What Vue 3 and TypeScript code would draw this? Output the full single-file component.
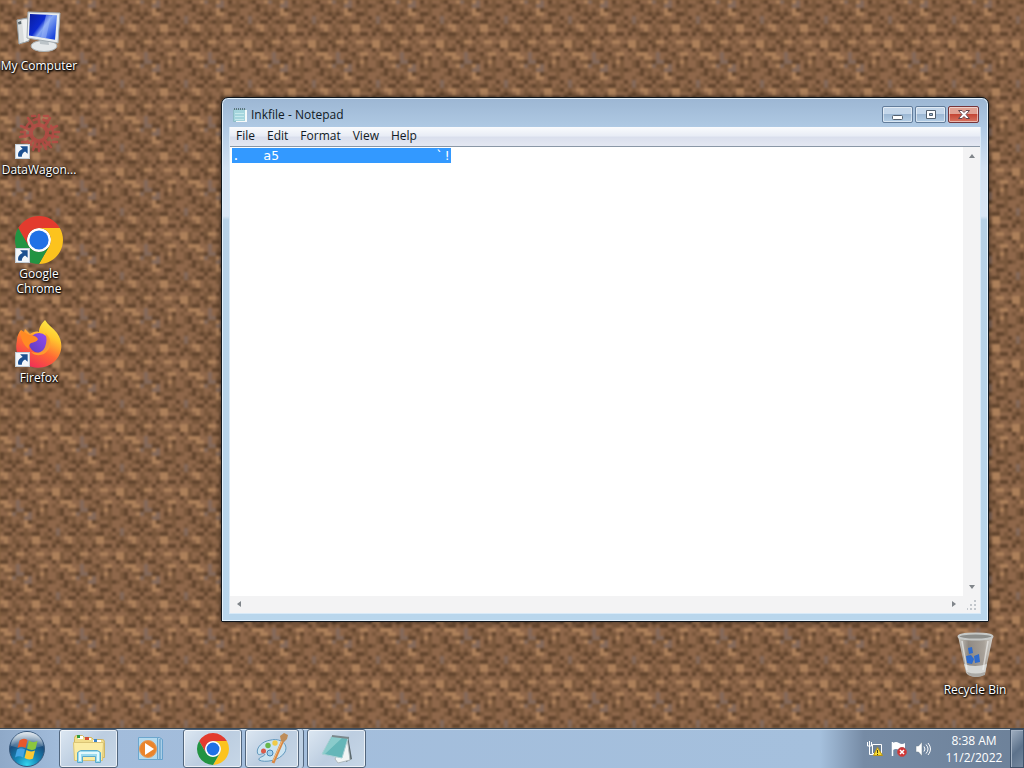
<script setup lang="ts">
import { computed, onMounted, ref } from 'vue'

const dirtRows: string[] = [
  'bblgmdmbmmbdmmlg',
  'mbggmbbbdbmmdbbm',
  'bmldbmmbmmmbdmbm',
  'dbllmddbmmbmmbdb',
  'mmbmmbmmdmgmbmmd',
  'bdbbddmbmbgbmddm',
  'mmbmllbbdmbmllmb',
  'bmmbllmmmbdbmlmb',
  'dbmdbmddmdmbddbm',
  'bmdmmbmmbmmmbbmb',
  'llmbmllmmllbmmdb',
  'bmbmbmmbdllbmbmd',
  'mddmmbbmmdmbddmb',
  'gmmbdmllmmblllmm',
  'gmbmbbmdmbmmbllm',
  'ggddmblbmmbdmbbd',
]
const dirtColors: Record<string, string> = {
  d: '#62452e',
  b: '#7a583c',
  m: '#8f674a',
  l: '#ad805a',
  g: '#84695a',
}
const soil = computed(() =>
  dirtRows.flatMap((row, y) =>
    row.split('').map((c, x) => ({ x: x * 4, y: y * 4, fill: dirtColors[c] })),
  ),
)

const menus: string[] = ['File', 'Edit', 'Format', 'View', 'Help']
const content = ref('.   a5' + ' '.repeat(20) + '`!')
const editor = ref<HTMLTextAreaElement | null>(null)

onMounted(() => {
  editor.value?.focus()
  editor.value?.setSelectionRange(0, content.value.length)
})
</script>

<template>
  <main class="desktop">
    <svg class="defs" width="0" height="0" aria-hidden="true">
      <symbol id="chrome" viewBox="0 0 48 48">
        <circle cx="24" cy="24" r="12" fill="#fff" />
        <path fill="#e33b2e" d="M24 12H44.78A24 24 0 0 0 3.22 12L13.61 30A12 12 0 0 1 24 12Z" />
        <path fill="#fcc31e" d="M34.39 30L24 48A24 24 0 0 0 44.78 12H24A12 12 0 0 1 34.39 30Z" />
        <path fill="#229342" d="M13.61 30L3.22 12A24 24 0 0 0 24 48L34.39 30A12 12 0 0 1 13.61 30Z" />
        <circle cx="24" cy="24" r="9.6" fill="#2071e5" />
      </symbol>
      <symbol id="shortcut" viewBox="0 0 14 14">
        <path fill="#f4f7fa" stroke="#c3ccd5" d="M.5.5h13v13H.5z" />
        <path fill="#1c4f8f" d="M4.8 2.2h7v7L9.4 6.9C7.2 8.2 6.3 9.8 6.4 12H3.2C2 8.6 4 6 7.2 4.7Z" />
      </symbol>
    </svg>

    <div class="work">
      <svg class="wallpaper" aria-hidden="true">
        <defs>
          <pattern id="dirt" x="16" y="0" width="64" height="64" patternUnits="userSpaceOnUse">
            <rect width="64" height="64" fill="#85603f" />
            <rect v-for="(p, i) in soil" :key="i" :x="p.x" :y="p.y" width="4" height="4" :fill="p.fill" />
          </pattern>
        </defs>
        <rect width="100%" height="100%" fill="url(#dirt)" />
      </svg>

      <nav class="icons" aria-label="Desktop icons">
        <button class="shortcut">
          <svg class="pic" viewBox="0 0 48 48">
            <defs>
              <linearGradient id="scr" x1="0" y1="0" x2="1" y2=".7">
                <stop offset="0" stop-color="#0a1c9c" /><stop offset=".45" stop-color="#0c2bd0" />
                <stop offset=".6" stop-color="#87a8f3" /><stop offset="1" stop-color="#1c47dd" />
              </linearGradient>
            </defs>
            <path fill="#d9dcdc" stroke="#98a0a4" d="M2 12l10-2 2 23-10 3Z" />
            <path fill="#eef0f0" d="M7 12l7-1 1 20-6 3Z" />
            <path fill="#5b676d" d="M3 14l3-1 .4 3-3 .6Z" />
            <ellipse cx="29" cy="38" rx="13" ry="5.5" fill="#e4e7e8" stroke="#a9afb2" />
            <path fill="#bcc3c7" d="M24 29l9 1 1 7-9-1Z" />
            <path fill="#e9ecee" stroke="#a3abb0" d="M13 4l32 1-2 30-31-5Z" />
            <path fill="url(#scr)" d="M15 6l27 1.200-2 24.500-26-4.200Z" />
            <path fill="#a9c2fa" opacity=".45" d="M31 6.900l5 .3-5 23-5-.8Z" />
          </svg>
          <span>My Computer</span>
        </button>
        <button class="shortcut">
          <svg class="pic" viewBox="0 0 48 48">
            <g fill="none" stroke="#b84a45" stroke-width="2.600" opacity=".8" stroke-linecap="round">
              <circle cx="24" cy="21" r="8" stroke-width="4" stroke-dasharray="5 2" />
              <circle cx="24" cy="21" r="14" stroke-dasharray="5 5" />
              <path d="M24 3v9M13 6l5 8M35 6l-5 8M6 14l9 4M42 14l-9 4M5 25l11-2M43 25l-11-2M12 35l7-8M36 35l-7-8M24 30v9M18 38l3-9M31 37l-4-8" />
              <path d="M17 4h3M29 4h4M6 20h3M40 20h4M7 30h4M38 30h4" />
            </g>
            <use href="#shortcut" x="0" y="32" width="15" height="15" />
          </svg>
          <span>DataWagon...</span>
        </button>
        <button class="shortcut">
          <svg class="pic" viewBox="0 0 48 48">
            <use href="#chrome" width="48" height="48" />
            <use href="#shortcut" x="0" y="32" width="15" height="15" />
          </svg>
          <span>Google<br />Chrome</span>
        </button>
        <button class="shortcut">
          <svg class="pic" viewBox="0 0 48 48">
            <defs>
              <linearGradient id="fox" x1=".8" y1="0" x2=".3" y2="1">
                <stop offset="0" stop-color="#fff04b" /><stop offset=".3" stop-color="#ffc72e" />
                <stop offset=".62" stop-color="#ff6a34" /><stop offset="1" stop-color="#f02a58" />
              </linearGradient>
              <linearGradient id="globe" x1="1" y1="0" x2="0" y2="1">
                <stop offset="0" stop-color="#9a4cf0" /><stop offset="1" stop-color="#5a3cbd" />
              </linearGradient>
            </defs>
            <path fill="url(#fox)" d="M30 0c3 5 8 8 12 13 7 10 5 21-2 28-8 8-22 9-31 2C2 38 0 29 2 20c0-4 2-8 4-10l2 5 2-6 5 5c3-2 6-3 9-2 0-5 3-9 6-12Z" />
            <circle cx="24" cy="23" r="10" fill="url(#globe)" />
            <path fill="#ff8a24" d="M6 10l8 5c4 0 7 1 9 4-1 3-4 3-7 4-2 2-3 3-2 6-5-3-9-10-8-19Z" />
            <path fill="#ffa02c" d="M30 13c6 4 7 12 3 17-4 6-12 7-17 2 7 2 12 0 14-5 2-5 2-10 0-14Z" opacity=".9" />
            <use href="#shortcut" x="0" y="32" width="15" height="15" />
          </svg>
          <span>Firefox</span>
        </button>
      </nav>

      <button class="shortcut bin">
        <svg class="pic" viewBox="0 0 48 48">
          <defs>
            <linearGradient id="glass"><stop offset="0" stop-color="#d2d2cd" /><stop offset=".3" stop-color="#8f8b86" /><stop offset=".75" stop-color="#aba69f" /><stop offset="1" stop-color="#dddcd8" /></linearGradient>
          </defs>
          <path fill="url(#glass)" opacity=".93" d="M7 4h35l-8 37q-9 7-19 0Z" />
          <path fill="#d5d5d2" d="M13 32q11 4 23 0l-2 10q-9 6-18 0Z" />
          <path fill="#aaa8a4" d="M16 40q9 3 18 0v3q-9 4-17 0Z" />
          <ellipse cx="24.500" cy="4.500" rx="17" ry="3" fill="#8c8d8a" stroke="#c6c8c6" stroke-width="2" />
          <path fill="#2f6bcb" d="M17 16l4-1 1 6-4 1ZM15 24l5-1 3 4-2 5-5-1ZM23 24l5-2 1 8-5 1Z" />
          <path stroke="#f5f5f3" stroke-width="1.500" opacity=".6" d="M11 9l5 29M37 9l-5 29" />
        </svg>
        <span>Recycle Bin</span>
      </button>

      <section class="window" aria-label="Inkfile - Notepad">
        <header class="title">
          <svg width="16" height="16" viewBox="0 0 16 16" aria-hidden="true">
            <path fill="#a5d5dd" stroke="#8fbcc6" d="M1.500 2.500h12v12h-12Z" />
            <path fill="#f6fafa" d="M13 3h2v12H4v-1h9Z" />
            <path stroke="#c6e9ec" d="M3 6.500h9M3 9.500h9M3 12.500h9" />
            <path stroke="#5d757e" stroke-dasharray="1 1" stroke-width="2" d="M2 2h12" />
          </svg>
          <h1>Inkfile - Notepad</h1>
          <div class="controls">
            <button aria-label="Minimize"><svg width="14" height="12" viewBox="0 0 14 12"><rect x="1.500" y="6.500" width="10" height="4" rx="1" fill="#fff" stroke="#53606e" /></svg></button>
            <button aria-label="Maximize"><svg width="12" height="12" viewBox="0 0 12 12"><path fill="#fff" fill-rule="evenodd" stroke="#53606e" d="M1.500 1.500h9v8h-9ZM4.500 4.500v2h3v-2Z" /></svg></button>
            <button class="close" aria-label="Close"><svg width="14" height="12" viewBox="0 0 14 12"><path fill="#fff" stroke="#65484e" d="M1.500 1.500h3.500l2 2 2-2h3.500L9 5.500l3.500 4H9l-2-2-2 2H1.500L5 5.500Z" /></svg></button>
          </div>
        </header>
        <div class="client">
          <nav class="menu" aria-label="Menu bar"><button v-for="m in menus" :key="m">{{ m }}</button></nav>
          <div class="sheet">
            <textarea ref="editor" v-model="content" aria-label="Document text" spellcheck="false" wrap="off"></textarea>
            <div class="vbar">
              <button aria-label="Scroll up"><svg width="8" height="5" viewBox="0 0 8 5"><path fill="#80858a" d="M4 0l3 4H1Z" /></svg></button>
              <button aria-label="Scroll down"><svg width="8" height="5" viewBox="0 0 8 5"><path fill="#80858a" d="M1 1h6L4 5Z" /></svg></button>
            </div>
            <div class="hbar">
              <button aria-label="Scroll left"><svg width="5" height="8" viewBox="0 0 5 8"><path fill="#80858a" d="M5 1v6L1 4Z" /></svg></button>
              <button aria-label="Scroll right"><svg width="5" height="8" viewBox="0 0 5 8"><path fill="#80858a" d="M0 1v6l4-3Z" /></svg></button>
            </div>
            <div class="grip"><svg width="10" height="10" viewBox="0 0 10 10"><path fill="#c3c7cc" d="M7 0h2v2H7ZM7 4h2v2H7ZM7 8h2v2H7ZM3 4h2v2H3ZM3 8h2v2H3ZM0 8h1v2H0Z" /></svg></div>
          </div>
        </div>
      </section>
    </div>

    <footer class="taskbar">
      <button class="start" aria-label="Start">
        <svg width="38" height="38" viewBox="0 0 38 38">
          <defs>
            <radialGradient id="orb" cx=".5" cy=".95" r=".9"><stop offset="0" stop-color="#35d5ee" /><stop offset=".35" stop-color="#1689b8" /><stop offset=".75" stop-color="#1a4c7c" /><stop offset="1" stop-color="#839fb8" /></radialGradient>
            <linearGradient id="shine" x2="0" y2="1"><stop offset="0" stop-color="#fff" stop-opacity=".75" /><stop offset="1" stop-color="#fff" stop-opacity=".1" /></linearGradient>
          </defs>
          <circle cx="19" cy="19" r="17.500" fill="url(#orb)" stroke="#38577a" />
          <path fill="url(#shine)" d="M3 16a16 14 0 0 1 32 0q-16 5-32 0Z" />
          <path fill="#e8582b" d="M11.500 10.500q4-3 8-.500l-2 8q-4-2.500-8 0Z" />
          <path fill="#8cc63e" d="M21 10.500q4 3 8.500 .500l-2 8q-4 2-8.500-.500Z" />
          <path fill="#43a4e4" d="M9 19.500q4-2.500 8 0L15 27.500q-4-2.500-8 0Z" />
          <path fill="#fcc934" d="M18.500 20q4 2.500 8.500 .500l-2 8q-4 2-8.500-.500Z" />
        </svg>
      </button>
      <button class="task open" aria-label="Windows Explorer">
        <svg width="36" height="32" viewBox="0 0 36 32">
          <path fill="#f2de8c" stroke="#cfb765" d="M3.500 5.500q0-3 2-3h6l2 2h7l2 2h9q2 0 2 3v15h-30Z" />
          <path fill="#fff" d="M7 3h5v3H7ZM14 5h6v2h-6ZM22 7h8v2h-8Z" />
          <path fill="#319b42" d="M6 2h3v3H6Z" /><path fill="#d55038" d="M14 4h4v3h-4Z" /><path fill="#3c83c5" d="M23 6h3v3h-3Z" />
          <path fill="#fbeca4" stroke="#dbc577" d="M2.500 9.500h30l-1 18h-28Z" />
          <path fill="#9cdbee" stroke="#5ba9cb" d="M6.500 29.500v-10l3-2h17l3 2v10h-5v-6h-13v6Z" />
          <path stroke="#e2f9fd" stroke-width="2" d="M9 28v-8h18v8" fill="none" />
        </svg>
      </button>
      <button class="task" aria-label="Windows Media Player">
        <svg width="28" height="28" viewBox="0 0 28 28">
          <path fill="#aacfe7" stroke="#66a2cd" d="M7.500 2.500h15l3 2v20h-18Z" />
          <path fill="#b4daee" stroke="#6ca6cd" d="M1.500 2.500h19v22h-19Z" />
          <path stroke="#5793bf" d="M23 4v20" />
          <circle cx="11" cy="14" r="8.500" fill="#ea842b" stroke="#e09a5c" />
          <path fill="#fff" d="M8 8l9 6-9 6Z" />
        </svg>
      </button>
      <button class="task open" aria-label="Google Chrome"><svg width="32" height="32" viewBox="0 0 48 48"><use href="#chrome" width="48" height="48" /></svg></button>
      <button class="task open stacked" aria-label="Paint">
        <svg width="32" height="32" viewBox="0 0 32 32">
          <path fill="#cbe3f1" stroke="#6298bd" d="M3 27c5 3 21 1 26-8 4-9-6-14-14-12C6 8 0 15 1.500 20c1 4 5-1 7 1s-7 3-5.500 6Z" />
          <circle cx="7.500" cy="18" r="2.500" fill="#d85b4a" /><circle cx="12" cy="12.500" r="2.700" fill="#66b64b" /><circle cx="19" cy="10" r="2.700" fill="#f0ca48" /><circle cx="14" cy="20" r="3" fill="#a4d0ec" stroke="#4a86b3" />
          <path stroke="#d88743" stroke-width="3" d="M17 30L27 7" /><path stroke="#f3bb7c" d="M17 28L26 8" />
          <path fill="#bd8c59" d="M25 8l-1-5 4-3 4 2-1 4-3 3Z" />
        </svg>
      </button>
      <button class="task open" aria-label="Notepad">
        <svg width="34" height="30" viewBox="0 0 34 30">
          <path fill="#5a676c" d="M28 2l4 23-6 3Z" /><path fill="#f2f5f5" stroke="#b0babd" d="M27 3l3 23-12 3-3-4Z" />
          <path fill="#65b6b8" stroke="#a9cfd3" d="M11.500 2.500L28 4l-6 20-20-4Z" />
          <path fill="#a4d9d7" opacity=".6" d="M12 3l10 1L5 20l-3 0Z" />
          <path stroke="#7b878b" stroke-width="2" d="M12 2l17 2" />
        </svg>
      </button>
      <div class="tray">
        <button aria-label="Network"><svg width="16" height="16" viewBox="0 0 16 16"><path fill="#6d8093" stroke="#fff" d="M5.500 3.500h9v9h-9Z" /><path fill="none" stroke="#fff" d="M.5 1v4h4V1M2.500 0v13.500h7" /><path fill="#f8dc32" stroke="#b99317" d="M10.500 6.500l5 8h-9Z" /><path stroke="#443a12" d="M10.500 9v3M10.500 13v1" /></svg></button>
        <button aria-label="Action Center"><svg width="16" height="16" viewBox="0 0 16 16"><path stroke="#fff" stroke-width="1.500" d="M1.500 1v14" /><path fill="#fff" d="M2 2q3-2 6 0t6 0v7q-3 2-6 0t-6 0Z" /><circle cx="11" cy="11" r="4.500" fill="#d33434" stroke="#b85050" /><path stroke="#fff" stroke-width="1.500" d="M9 9l4 4M13 9l-4 4" /></svg></button>
        <button aria-label="Volume"><svg width="16" height="16" viewBox="0 0 16 16"><path fill="#fff" stroke="#6d7c8b" stroke-width=".5" d="M1 5h2.500L7 1v14l-3.500-4H1Z" /><path fill="none" stroke="#fff" d="M9 5.500q2 2.500 0 5M11 3.500q4 4.500 0 9M13 2q5 6 0 12" /></svg></button>
      </div>
      <button class="clock"><time>8:38 AM</time><time>11/2/2022</time></button>
      <button class="peek" aria-label="Show desktop"></button>
    </footer>
  </main>
</template>

<style>
html, body { margin: 0; background: #85603f; overflow: hidden; }
</style>

<style scoped>
.desktop { min-height: 100vh; display: flex; flex-direction: column; font: 12px/15px "Open Sans", "Noto Sans", sans-serif; color: #111a25; }
* { box-sizing: border-box; }
.desktop button { border: 0; padding: 0; margin: 0; background: none; font: inherit; color: inherit; }
.desktop svg { display: block; flex: none; }
.desktop .defs { position: absolute; }
.work { position: relative; flex: 1; overflow: hidden; }
.wallpaper { position: absolute; inset: 0; width: 100%; height: 100%; filter: blur(1px); }
.icons { position: relative; display: flex; flex-direction: column; width: 78px; padding-top: 8px; }
.desktop .shortcut { display: flex; flex-direction: column; align-items: center; justify-content: flex-start; gap: 2px; height: 104px; width: 78px; color: #fff; text-shadow: 0 1px 2px #000, 1px 1px 2px #000, 0 0 3px #000; white-space: nowrap; }
.pic { width: 48px; height: 48px; }
.desktop .bin { position: absolute; right: 10px; bottom: 0; height: 96px; }

.window { position: absolute; left: 221px; top: 97px; right: 35px; bottom: 106px; display: flex; flex-direction: column; padding: 0 7px 7px; border: 1px solid #10161d; border-radius: 7px 7px 1px 1px; background: linear-gradient(#9cb6d3, #b0cae4 30px, #d3e2f2 70px, #dae7f5 118px, #b7d1e6 122px, #b9d6ec); box-shadow: inset 0 0 0 1px #e3f1fb, 0 0 5px rgba(0, 0, 0, .6); }
.title { display: flex; align-items: center; gap: 3px; height: 29px; padding: 4px 2px 0 3px; }
.title h1 { flex: 1; margin: 0; font-size: 12px; font-weight: 400; }
.controls { display: flex; gap: 2px; align-self: flex-start; padding-top: 4px; }
.desktop .controls button { display: flex; align-items: center; justify-content: center; width: 31px; height: 17px; border: 1px solid #637d9b; border-radius: 2px; background: linear-gradient(#c3d6ea 45%, #9db8d4 50%, #b4cee6); box-shadow: inset 0 0 0 1px rgba(255, 255, 255, .5); }
.desktop .controls .close { border-color: #76353a; background: linear-gradient(#e0a193 45%, #c44736 50%, #d77561); }
.client { flex: 1; display: flex; flex-direction: column; border: 1px solid #d9eaf8; border-top: 0; min-height: 0; }
.menu { display: flex; height: 20px; flex: none; padding-bottom: 2px; background: linear-gradient(#fafbfd, #e9edf6 45%, #dadfed 55%, #e4e8f2); border-bottom: 1px solid #8a97a6; }
.desktop .menu button { padding: 0 6px; }
.sheet { flex: 1; display: grid; grid-template-columns: 1fr 17px; grid-template-rows: 1fr 17px; background: #fff; min-height: 0; }
textarea { width: 100%; height: 100%; border: 0; outline: 0; margin: 0; padding: 2px 0 0 2px; resize: none; overflow: hidden; background: #fff; color: #000; font: 13px/13px "DejaVu Sans Mono", monospace; }
textarea::selection { background: #3399ff; color: #fff; }
.vbar, .hbar, .grip { display: flex; align-items: center; justify-content: space-between; background: #f3f3f4; }
.vbar { flex-direction: column; padding: 7px 0; }
.hbar { padding: 0 6px 2px; }
.grip { align-items: flex-end; justify-content: flex-end; padding: 3px; }

.taskbar { position: relative; display: flex; align-items: center; height: 40px; flex: none; gap: 3px; border-top: 1px solid #3c4957; box-shadow: inset 0 1px #c9dae9; background: linear-gradient(90deg, #8fa9c8, #a2bcdb 60px, #a5c0dd calc(100% - 204px), #768ba5 calc(100% - 160px), #6d8199); }
.desktop .start { width: 56px; display: flex; padding-left: 8px; }
.desktop .task { position: relative; width: 59px; height: 39px; display: flex; align-items: center; justify-content: center; border-radius: 3px; }
.desktop .task.open { border: 1px solid #52667d; background: linear-gradient(135deg, #dce7f2, #bccde0 50%, #c7d7e7); box-shadow: inset 0 0 0 1px rgba(255, 255, 255, .65); }
.desktop .task.stacked { width: 54px; margin-right: 5px; }
.stacked::after { content: ""; position: absolute; right: -6px; top: -1px; bottom: -1px; width: 4px; border-right: 1px solid #52667d; border-radius: 0 3px 3px 0; background: #bdd0e4; }
.tray { display: flex; gap: 8px; margin-left: auto; }
.desktop .clock { width: 62px; display: flex; flex-direction: column; align-items: center; color: #fff; line-height: 17px; margin-left: 9px; }
.desktop .peek { width: 14px; height: 39px; margin-left: 2px; border: 1px solid #40536a; background: linear-gradient(135deg, #a1b0c2, #5d728b 55%, #75889e); box-shadow: inset 1px 1px #a4b2c3; }
</style>
